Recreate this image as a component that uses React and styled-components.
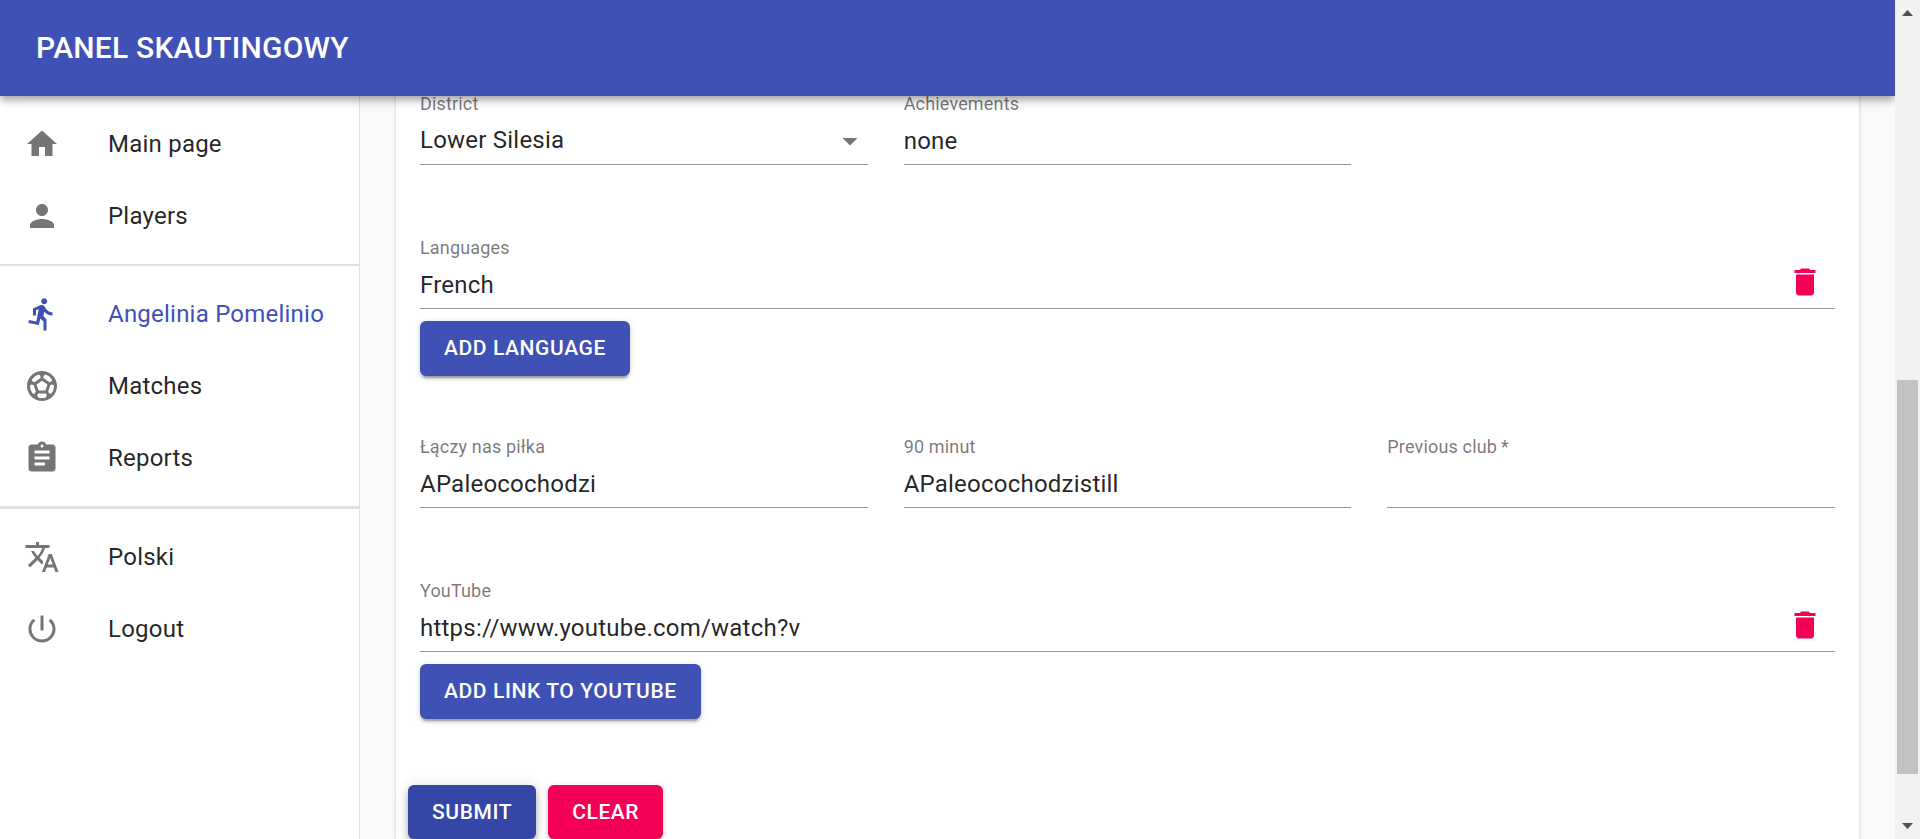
import React from "react";
import styled, { createGlobalStyle, css } from "styled-components";
import {
  MdHome,
  MdPerson,
  MdDirectionsRun,
  MdSportsSoccer,
  MdAssignment,
  MdTranslate,
  MdPowerSettingsNew,
  MdDelete,
  MdArrowDropDown,
} from "react-icons/md";

const GlobalStyle = createGlobalStyle`
  *, *::before, *::after { box-sizing: border-box; }
  body {
    margin: 0;
    background: #fafafa;
    color: rgba(0, 0, 0, 0.87);
    font-family: Roboto, "Liberation Sans", sans-serif;
    overflow: hidden;
  }
`;

const Screen = styled.div`
  display: flex;
  width: 100%;
  height: 100vh;
  overflow: hidden;
`;

const Page = styled.div`
  display: flex;
  flex-direction: column;
  flex: 1;
  min-width: 0;
  overflow: hidden;
`;

const AppBar = styled.header`
  position: relative;
  z-index: 2;
  display: flex;
  align-items: center;
  flex: none;
  height: 96px;
  padding: 0 36px;
  background: #3f51b5;
  box-shadow: 0 3px 6px -1.5px rgba(0, 0, 0, 0.2),
    0 6px 7.5px 0 rgba(0, 0, 0, 0.14), 0 1.5px 15px 0 rgba(0, 0, 0, 0.12);
`;

const Title = styled.h1`
  margin: 0;
  color: #fff;
  font-size: 30px;
  font-weight: 500;
  line-height: 48px;
  letter-spacing: 0.0075em;
`;

const Body = styled.div`
  display: flex;
  flex: 1;
  min-height: 0;
`;

const Sidebar = styled.nav`
  flex: none;
  width: 360px;
  background: #fff;
  border-right: 1px solid #e0e0e0;
`;

const NavList = styled.ul`
  margin: 0;
  padding: 12px 0;
  list-style: none;
`;

const NavItem = styled.li`
  display: flex;
  align-items: center;
  height: 72px;
  padding: 0 24px;
  font-size: 24px;
  line-height: 36px;
  letter-spacing: 0.00938em;
  white-space: nowrap;
  color: ${(p) => (p.$active ? "#3f51b5" : "inherit")};

  svg {
    flex: none;
    width: 36px;
    height: 36px;
    margin-right: 48px;
    color: ${(p) => (p.$active ? "#3f51b5" : "#757575")};
  }
`;

const Divider = styled.hr`
  height: ${(p) => p.$size}px;
  margin: 0;
  border: 0;
  background: #e0e0e0;
`;

const Main = styled.main`
  flex: 1;
  min-width: 0;
  padding: 0 36px;
  overflow: hidden;
`;

const Paper = styled.section`
  height: calc(100% + 24px);
  padding: 0 24px;
  background: #fff;
  box-shadow: 0 3px 1.5px -1.5px rgba(0, 0, 0, 0.2),
    0 1.5px 1.5px 0 rgba(0, 0, 0, 0.14), 0 1.5px 4.5px 0 rgba(0, 0, 0, 0.12);
`;

const Form = styled.form`
  display: flex;
  flex-direction: column;
  margin-top: -3px;
`;

const FieldRow = styled.div`
  display: grid;
  grid-template-columns: repeat(3, 1fr);
  column-gap: 36px;
  margin-bottom: 72px;
`;

const FieldGroup = styled.div`
  display: flex;
  flex-direction: column;
  align-items: flex-start;
  gap: 12px;
  margin-bottom: 60px;
`;

const FieldBox = styled.div`
  display: flex;
  flex-direction: column;
  width: 100%;
  height: 72px;
  border-bottom: 1px solid #949494;
`;

const Label = styled.label`
  height: 24px;
  padding-top: 2px;
  color: rgba(0, 0, 0, 0.54);
  font-size: 18px;
  line-height: 18px;
  letter-spacing: 0.00938em;
  white-space: nowrap;
`;

const Control = styled.div`
  display: flex;
  align-items: center;
  justify-content: space-between;
  height: ${(p) => (p.$select ? 45 : 47)}px;
  font-size: 24px;
  line-height: 28px;
  letter-spacing: 0.00938em;
`;

const SelectArrow = styled(MdArrowDropDown)`
  width: 36px;
  height: 36px;
  margin-top: 2px;
  color: #757575;
`;

const DeleteButton = styled.button`
  display: flex;
  margin: -6px 0 0;
  padding: 0 12px;
  border: 0;
  background: none;
  color: #f50057;

  svg {
    width: 36px;
    height: 36px;
  }
`;

const tones = {
  primary: css`
    background: #3f51b5;
  `,
  primaryDark: css`
    background: #3646a8;
    box-shadow: 0 3px 6px -1.5px rgba(0, 0, 0, 0.2),
      0 6px 7.5px 0 rgba(0, 0, 0, 0.14), 0 1.5px 15px 0 rgba(0, 0, 0, 0.12);
  `,
  secondary: css`
    background: #f50057;
  `,
};

const Button = styled.button`
  height: 55px;
  padding: 0 24px 2px;
  border: 0;
  border-radius: 6px;
  color: #fff;
  font-family: inherit;
  font-size: 21px;
  font-weight: 500;
  line-height: 36px;
  letter-spacing: 0.02857em;
  text-transform: uppercase;
  white-space: nowrap;
  box-shadow: 0 4.5px 1.5px -3px rgba(0, 0, 0, 0.2),
    0 3px 3px 0 rgba(0, 0, 0, 0.14), 0 1.5px 7.5px 0 rgba(0, 0, 0, 0.12);
  ${(p) => tones[p.$tone || "primary"]}
`;

const Actions = styled.div`
  display: flex;
  gap: 12px;
  margin: 6px 0 0 -12px;

  ${Button} {
    height: 54px;
    padding-bottom: 1px;
  }
`;

const ScrollTrack = styled.div`
  display: flex;
  flex-direction: column;
  align-items: center;
  flex: none;
  width: 25px;
  background: #f1f1f1;
`;

const ScrollArrow = styled.svg`
  flex: none;
  width: 25px;
  height: 25px;
  fill: #505050;
`;

const ScrollRail = styled.div`
  flex: 1;
  width: 21px;
  padding: 355px 0 40px;
`;

const ScrollThumb = styled.div`
  height: 100%;
  background: #c1c1c1;
`;

const navGroups = [
  [
    { icon: MdHome, text: "Main page" },
    { icon: MdPerson, text: "Players" },
  ],
  [
    { icon: MdDirectionsRun, text: "Angelinia Pomelinio", active: true },
    { icon: MdSportsSoccer, text: "Matches" },
    { icon: MdAssignment, text: "Reports" },
  ],
  [
    { icon: MdTranslate, text: "Polski" },
    { icon: MdPowerSettingsNew, text: "Logout" },
  ],
];

const dividerSizes = [2, 3];

function Field({ label, value, select, removable }) {
  return (
    <FieldBox>
      <Label>{label}</Label>
      <Control $select={select}>
        <span>{value}</span>
        {select && <SelectArrow />}
        {removable && (
          <DeleteButton type="button" aria-label="Delete">
            <MdDelete />
          </DeleteButton>
        )}
      </Control>
    </FieldBox>
  );
}

export default function App() {
  return (
    <>
      <GlobalStyle />
      <Screen>
        <Page>
          <AppBar>
            <Title>PANEL SKAUTINGOWY</Title>
          </AppBar>
          <Body>
            <Sidebar>
              {navGroups.map((group, i) => (
                <React.Fragment key={i}>
                  <NavList>
                    {group.map(({ icon: Icon, text, active }) => (
                      <NavItem key={text} $active={active}>
                        <Icon />
                        {text}
                      </NavItem>
                    ))}
                  </NavList>
                  {dividerSizes[i] && <Divider $size={dividerSizes[i]} />}
                </React.Fragment>
              ))}
            </Sidebar>
            <Main>
              <Paper>
                <Form>
                  <FieldRow>
                    <Field label="District" value="Lower Silesia" select />
                    <Field label="Achievements" value="none" />
                  </FieldRow>
                  <FieldGroup>
                    <Field label="Languages" value="French" removable />
                    <Button type="button">Add language</Button>
                  </FieldGroup>
                  <FieldRow>
                    <Field label="Łączy nas piłka" value="APaleocochodzi" />
                    <Field label="90 minut" value="APaleocochodzistill" />
                    <Field label={"Previous club\u2009*"} value="" />
                  </FieldRow>
                  <FieldGroup>
                    <Field
                      label="YouTube"
                      value="https://www.youtube.com/watch?v"
                      removable
                    />
                    <Button type="button">Add link to YouTube</Button>
                  </FieldGroup>
                  <Actions>
                    <Button type="button" $tone="primaryDark">
                      Submit
                    </Button>
                    <Button type="button" $tone="secondary">
                      Clear
                    </Button>
                  </Actions>
                </Form>
              </Paper>
            </Main>
          </Body>
        </Page>
        <ScrollTrack>
          <ScrollArrow viewBox="0 0 25 25">
            <path d="M7 16h11l-5.5-6z" />
          </ScrollArrow>
          <ScrollRail>
            <ScrollThumb />
          </ScrollRail>
          <ScrollArrow viewBox="0 0 25 25">
            <path d="M7 9h11l-5.5 6z" />
          </ScrollArrow>
        </ScrollTrack>
      </Screen>
    </>
  );
}
